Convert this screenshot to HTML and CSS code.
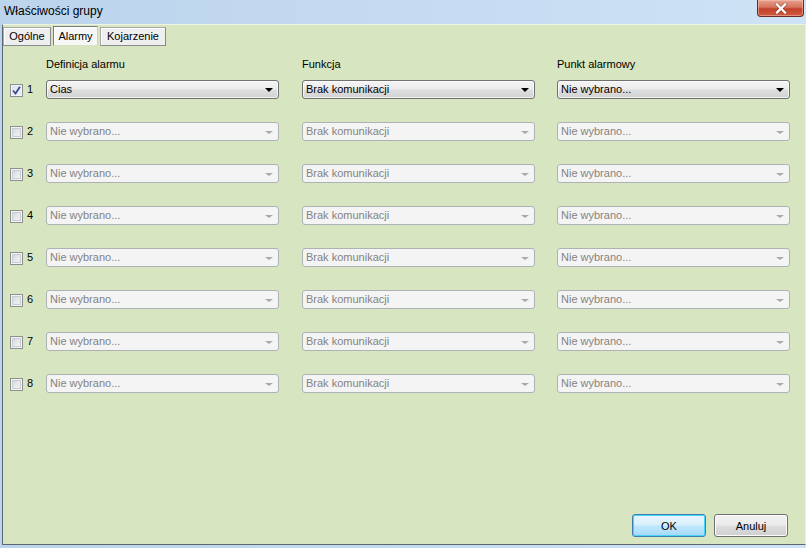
FILE: index.html
```html
<!DOCTYPE html>
<html lang="pl">
<head>
<meta charset="utf-8">
<title>Właściwości grupy</title>
<link rel="stylesheet" href="styles.css">
</head>
<body>
<div class="window">
  <div class="titlebar">
    <span class="title">Właściwości grupy</span>
    <button class="close" aria-label="Zamknij">
      <svg width="14" height="11" viewBox="0 0 14 11"><path d="M3 1.5 L11 9.5 M11 1.5 L3 9.5" stroke="#5a1a10" stroke-width="3.6" stroke-linecap="square" opacity="0.45"/><path d="M3 1.5 L11 9.5 M11 1.5 L3 9.5" stroke="#ffffff" stroke-width="2.4" stroke-linecap="square"/></svg>
    </button>
  </div>
  <div class="panel">
    <div class="tabs">
      <div class="tab">Ogólne</div>
      <div class="tab active">Alarmy</div>
      <div class="tab">Kojarzenie</div>
    </div>
    <div class="heads">
      <div></div>
      <div class="head">Definicja alarmu</div>
      <div class="head">Funkcja</div>
      <div class="head">Punkt alarmowy</div>
    </div>
    <div class="alarms">
      <div class="cell-check"><span class="cb checked"><svg width="9" height="9" viewBox="0 0 9 9"><path d="M1 4.5 L3.5 7.5 L8 0.8" fill="none" stroke="#3b4f8e" stroke-width="1.8"/></svg></span><span class="num">1</span></div>
      <div class="combo"><span class="val">Cias</span><span class="arrow"></span></div>
      <div class="combo"><span class="val">Brak komunikacji</span><span class="arrow"></span></div>
      <div class="combo"><span class="val">Nie wybrano...</span><span class="arrow"></span></div>

      <div class="cell-check"><span class="cb"></span><span class="num">2</span></div>
      <div class="combo disabled"><span class="val">Nie wybrano...</span><span class="arrow"></span></div>
      <div class="combo disabled"><span class="val">Brak komunikacji</span><span class="arrow"></span></div>
      <div class="combo disabled"><span class="val">Nie wybrano...</span><span class="arrow"></span></div>

      <div class="cell-check"><span class="cb"></span><span class="num">3</span></div>
      <div class="combo disabled"><span class="val">Nie wybrano...</span><span class="arrow"></span></div>
      <div class="combo disabled"><span class="val">Brak komunikacji</span><span class="arrow"></span></div>
      <div class="combo disabled"><span class="val">Nie wybrano...</span><span class="arrow"></span></div>

      <div class="cell-check"><span class="cb"></span><span class="num">4</span></div>
      <div class="combo disabled"><span class="val">Nie wybrano...</span><span class="arrow"></span></div>
      <div class="combo disabled"><span class="val">Brak komunikacji</span><span class="arrow"></span></div>
      <div class="combo disabled"><span class="val">Nie wybrano...</span><span class="arrow"></span></div>

      <div class="cell-check"><span class="cb"></span><span class="num">5</span></div>
      <div class="combo disabled"><span class="val">Nie wybrano...</span><span class="arrow"></span></div>
      <div class="combo disabled"><span class="val">Brak komunikacji</span><span class="arrow"></span></div>
      <div class="combo disabled"><span class="val">Nie wybrano...</span><span class="arrow"></span></div>

      <div class="cell-check"><span class="cb"></span><span class="num">6</span></div>
      <div class="combo disabled"><span class="val">Nie wybrano...</span><span class="arrow"></span></div>
      <div class="combo disabled"><span class="val">Brak komunikacji</span><span class="arrow"></span></div>
      <div class="combo disabled"><span class="val">Nie wybrano...</span><span class="arrow"></span></div>

      <div class="cell-check"><span class="cb"></span><span class="num">7</span></div>
      <div class="combo disabled"><span class="val">Nie wybrano...</span><span class="arrow"></span></div>
      <div class="combo disabled"><span class="val">Brak komunikacji</span><span class="arrow"></span></div>
      <div class="combo disabled"><span class="val">Nie wybrano...</span><span class="arrow"></span></div>

      <div class="cell-check"><span class="cb"></span><span class="num">8</span></div>
      <div class="combo disabled"><span class="val">Nie wybrano...</span><span class="arrow"></span></div>
      <div class="combo disabled"><span class="val">Brak komunikacji</span><span class="arrow"></span></div>
      <div class="combo disabled"><span class="val">Nie wybrano...</span><span class="arrow"></span></div>
    </div>
    <div class="buttons">
      <button class="btn default">OK</button>
      <button class="btn">Anuluj</button>
    </div>
  </div>
</div>
</body>
</html>
```

FILE: styles.css
```css
html, body {
  margin: 0;
  padding: 0;
}
body {
  width: 806px;
  height: 548px;
  overflow: hidden;
  font-family: "Liberation Sans", Arial, sans-serif;
  font-size: 11px;
  color: #000;
}
.window {
  width: 806px;
  height: 548px;
  box-sizing: border-box;
  background: linear-gradient(90deg, #bcd4ec 0%, #c6dcf2 60%, #cfe3f6 100%);
  display: flex;
  flex-direction: column;
  padding: 0 0 3px 2px;
}
.titlebar {
  height: 24px;
  flex: none;
  display: flex;
  justify-content: space-between;
  align-items: flex-start;
  margin-left: -2px;
}
.title {
  font-size: 12px;
  line-height: 14px;
  padding: 4px 0 0 4px;
  color: #000;
}
.close {
  width: 47px;
  height: 17px;
  margin: 0 2px 0 0;
  padding: 0;
  border: 1px solid #6c2b22;
  border-top: none;
  border-radius: 0 0 4px 4px;
  background: linear-gradient(180deg, #e6a08e 0%, #d7735c 45%, #c2422c 55%, #cf5a3e 100%);
  box-shadow: inset 0 0 0 1px rgba(255, 210, 200, 0.45);
  display: flex;
  align-items: center;
  justify-content: center;
}
.close svg {
  display: block;
}
.panel {
  flex: 1;
  display: flex;
  flex-direction: column;
  background: #d7e6c1;
  border-top: 1px solid #eef3e6;
  border-left: 1px solid #5c6770;
  border-bottom: 1px solid #5c6770;
  border-right: 1px solid #e9f0df;
  padding: 1px 0 0 0;
}
.tabs {
  display: flex;
  gap: 2px;
  height: 20px;
  align-items: flex-end;
}
.tab {
  height: 19px;
  box-sizing: border-box;
  line-height: 17px;
  padding: 0 6px;
  background: #efefef;
  border: 1px solid #8a8a8a;
  border-top-color: #a8a8a8;
  border-left-color: #a8a8a8;
  box-shadow: inset 1px 1px 0 #ffffff;
  font-size: 11px;
  color: #000;
}
.tab:first-child {
  width: 48px;
  text-align: center;
  padding: 0;
}
.tab.active {
  height: 20px;
  line-height: 19px;
  width: 45px;
  padding: 0;
  text-align: center;
  background: #f7f7f7;
  border-color: #7a7a7a;
  border-right-color: #cfcfcf;
  border-bottom-color: #d7e6c1;
}
.heads,
.alarms {
  display: grid;
  grid-template-columns: 36px 256px 255px 233px;
  padding-left: 7px;
}
.heads {
  padding-top: 12px;
  margin-bottom: 9px;
}
.head {
  line-height: 13px;
}
.alarms {
  grid-auto-rows: 19px;
  row-gap: 23px;
  align-items: center;
}
.cell-check {
  display: flex;
  align-items: center;
  gap: 3px;
}
.cb {
  width: 13px;
  height: 13px;
  box-sizing: border-box;
  border: 1px solid #8e8f8f;
  background: linear-gradient(135deg, #cbcfd5 0%, #e6e8eb 50%, #f4f4f4 100%);
  box-shadow: inset 0 0 0 1px #f4f4f4, inset 0 0 0 2px #c9ccd1;
  display: flex;
  align-items: center;
  justify-content: center;
  position: relative;
  top: 1px;
}
.cb.checked {
  background: linear-gradient(135deg, #dde3f0 0%, #eef1f7 100%);
  box-shadow: inset 0 0 0 1px #f2f4f8;
}
.cb svg {
  display: block;
}
.num {
  line-height: 13px;
  padding-left: 1px;
}
.combo {
  width: 233px;
  height: 19px;
  box-sizing: border-box;
  border: 1px solid #707070;
  border-radius: 3px;
  background: linear-gradient(180deg, #f4f4f4 0%, #ececec 45%, #dedede 55%, #d2d2d2 100%);
  box-shadow: inset 0 0 0 1px rgba(255, 255, 255, 0.7);
  display: flex;
  align-items: center;
  justify-content: space-between;
  padding: 0 5px 0 3px;
}
.combo .val {
  line-height: 15px;
  white-space: nowrap;
}
.arrow {
  width: 0;
  height: 0;
  border-left: 4px solid transparent;
  border-right: 4px solid transparent;
  border-top: 4px solid #000;
  margin-top: 1px;
}
.combo.disabled {
  border-color: #adb2b5;
  background: #f4f4f4;
  box-shadow: none;
}
.combo.disabled .val {
  color: #838383;
}
.combo.disabled .arrow {
  border-top-color: #a9a9a9;
  border-top-width: 3px;
}
.buttons {
  margin-top: auto;
  display: flex;
  justify-content: flex-end;
  gap: 8px;
  padding: 0 17px 7px 0;
}
.btn {
  width: 74px;
  height: 23px;
  box-sizing: border-box;
  font-family: "Liberation Sans", Arial, sans-serif;
  font-size: 11px;
  color: #000;
  border: 1px solid #707070;
  border-radius: 3px;
  background: linear-gradient(180deg, #f2f2f2 0%, #ebebeb 45%, #dddddd 55%, #cfcfcf 100%);
  box-shadow: inset 0 0 0 1px #fcfcfc;
  padding: 0;
}
.btn.default {
  border-color: #3c7fb1;
  background: linear-gradient(180deg, #eaf6fd 0%, #d9f0fc 45%, #bee6fd 55%, #a7d9f5 100%);
  box-shadow: inset 0 0 0 1px #48d3fb;
}
```
